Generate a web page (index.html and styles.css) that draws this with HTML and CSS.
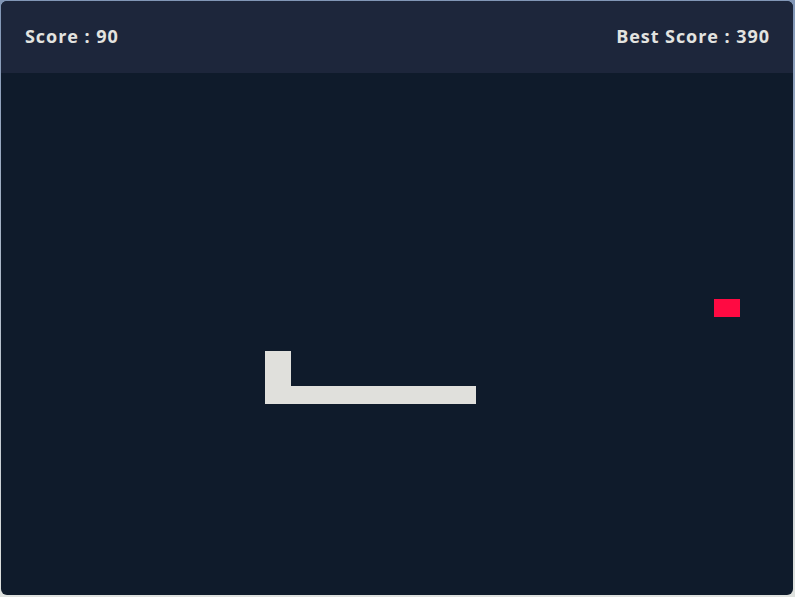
FILE: index.html
```html
<!DOCTYPE html>
<html>
<head>
<meta charset="utf-8">
<link rel="stylesheet" href="styles.css">
</head>
<body>
<div class="game">
  <header class="bar">
    <span class="score">Score : 90</span>
    <span class="score">Best Score : 390</span>
  </header>
  <div class="board">
    <div class="snake" style="grid-area: 17 / 11 / 19 / 12;"></div>
    <div class="snake" style="grid-area: 19 / 11 / 20 / 19;"></div>
    <div class="food" style="grid-area: 14 / 28 / 15 / 29;"></div>
  </div>
</div>
</body>
</html>
```
FILE: styles.css
```css
html, body {
  margin: 0;
  padding: 0;
  height: 100%;
}
body {
  background: linear-gradient(#8196b6, #dfe2df);
  overflow: hidden;
}
.game {
  margin: 1px 0 0 1px;
  width: 792px;
  height: 594px;
  border-radius: 6px;
  overflow: hidden;
  background: #0f1b2b;
  display: flex;
  flex-direction: column;
}
.bar {
  height: 72px;
  flex: none;
  background: #1d263b;
  display: flex;
  align-items: center;
  justify-content: space-between;
  padding: 0 23px 2px 24px;
  box-sizing: border-box;
}
.score {
  font-family: "Open Sans", "Liberation Sans", sans-serif;
  font-weight: 700;
  font-size: 18px;
  color: #e3e3e0;
  letter-spacing: 0.95px;
}
.board {
  flex: 1;
  display: grid;
  grid-template-columns: repeat(30, 1fr);
  grid-template-rows: repeat(30, 1fr);
}
.snake {
  background: #e0e0dc;
}
.food {
  background: #ff0a42;
}
```
